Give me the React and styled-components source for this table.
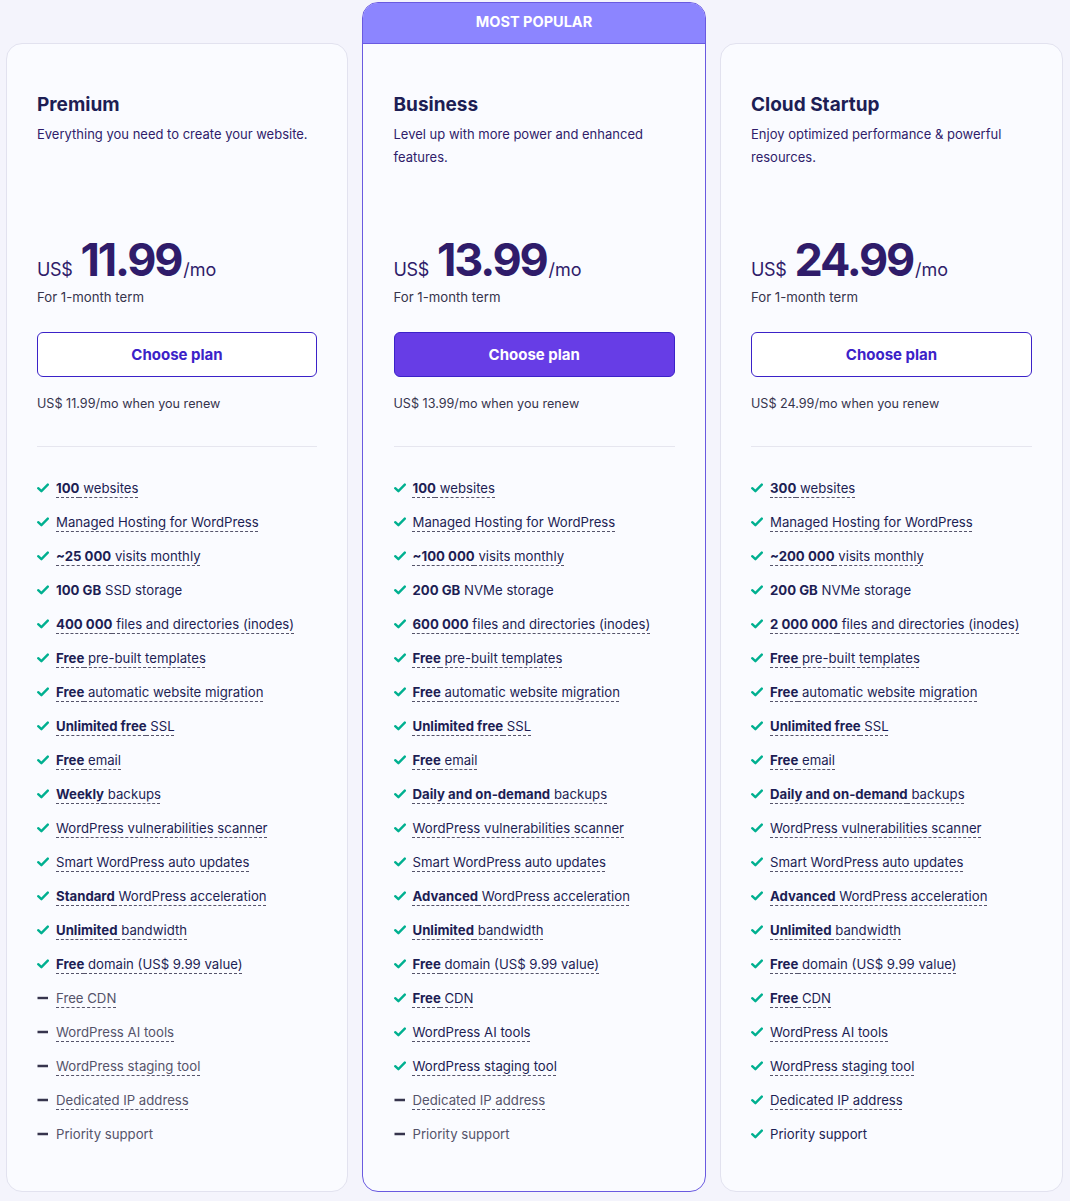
import React from 'react';
import styled, { createGlobalStyle } from 'styled-components';

const GlobalStyle = createGlobalStyle`
    html, body {
        margin: 0;
        padding: 0;
        background: #f4f4fc;
    }
    body {
        font-family: Inter, 'Noto Sans', sans-serif;
        color: #1d1e54;
    }
`;

const Page = styled.div`
    width: 1070px;
    height: 1201px;
    box-sizing: border-box;
    padding: 2px 7px 9px 6px;
    display: grid;
    grid-template-columns: 342px 344px 343px;
    column-gap: 14px;
`;

const Column = styled.div`
    display: flex;
    flex-direction: column;
    padding-top: ${props => (props.featured ? 0 : 41)}px;
`;

const Card = styled.div`
    flex: 1;
    display: flex;
    flex-direction: column;
    background: #fafbff;
    border: ${props => (props.featured ? '1.5px solid #6a5ae0' : '1px solid #e2e2ef')};
    border-radius: 16px;
    overflow: hidden;
`;

const Banner = styled.div`
    height: 41px;
    box-sizing: border-box;
    padding-bottom: 4px;
    background: #8c85ff;
    border-bottom: 1.5px solid #6a5ae0;
    color: #fff;
    font-weight: 700;
    font-size: 14.5px;
    display: flex;
    align-items: center;
    justify-content: center;
`;

const Body = styled.div`
    padding: 49px 30px 40px ${props => (props.featured ? 30.5 : 30)}px;
    display: flex;
    flex-direction: column;
`;

const Title = styled.h2`
    margin: 0;
    font-size: 19px;
    line-height: 24px;
    font-weight: 700;
    color: #1d1e54;
`;

const Description = styled.p`
    margin: 6px 0 0;
    font-size: 13px;
    line-height: 23px;
    min-height: 46px;
    color: #2f1c6a;
`;

const PriceRow = styled.div`
    margin-top: 68px;
    display: flex;
    align-items: baseline;
    color: #2f1c6a;
`;

const Currency = styled.span`
    font-size: 18px;
    letter-spacing: -0.3px;
    margin-right: 8px;
`;

const Amount = styled.span`
    font-size: 45px;
    line-height: 46px;
    font-weight: 700;
    letter-spacing: -2.2px;
`;

const Period = styled.span`
    font-size: 18px;
    margin-left: 2px;
`;

const Term = styled.div`
    margin-top: 4px;
    font-size: 13.2px;
    line-height: 20px;
    color: #36344d;
`;

const Button = styled.button`
    margin-top: 25px;
    height: 45px;
    width: 100%;
    border-radius: 6px;
    border: 1.5px solid #3b22c8;
    background: ${props => (props.primary ? '#673de6' : '#ffffff')};
    color: ${props => (props.primary ? '#ffffff' : '#3b22c8')};
    font-family: Inter, 'Noto Sans', sans-serif;
    font-size: 15px;
    font-weight: 700;
    cursor: pointer;
`;

const Renew = styled.div`
    margin-top: 17px;
    font-size: 12.6px;
    line-height: 20px;
    color: #36344d;
`;

const Divider = styled.hr`
    margin: 32px 0 0;
    border: none;
    border-top: 1.5px solid #e6e6ef;
`;

const Features = styled.ul`
    list-style: none;
    margin: 24px 0 0;
    padding: 0;
`;

const Feature = styled.li`
    height: 34px;
    display: flex;
    align-items: center;
    font-size: 13.2px;
    color: ${props => (props.off ? '#55536a' : '#1d1e54')};
`;

const IconBox = styled.span`
    width: 19px;
    flex-shrink: 0;
    display: flex;
    align-items: center;
`;

const Label = styled.span`
    text-decoration: ${props => (props.dashed ? 'underline dashed' : 'none')};
    text-decoration-color: #55536a;
    text-underline-offset: 4px;
    text-decoration-thickness: 1px;

    b {
        font-weight: 700;
        color: ${props => (props.off ? '#55536a' : '#1d1e54')};
    }
`;

const Check = () => (
    <svg width="12" height="10" viewBox="0 0 12 10">
        <path d="M1.2 5.2 L4.4 8.2 L10.8 1.6" fill="none" stroke="#00b090" strokeWidth="2.4" strokeLinecap="round" strokeLinejoin="round" />
    </svg>
);

const Dash = () => (
    <svg width="12" height="10" viewBox="0 0 12 10">
        <path d="M0.5 5 H11" stroke="#36344d" strokeWidth="2.4" />
    </svg>
);

// "**bold** rest" -> spans
const renderText = text =>
    text.split(/(\*\*[^*]+\*\*)/).filter(Boolean).map((part, i) =>
        part.startsWith('**') ? <b key={i}>{part.slice(2, -2)}</b> : <React.Fragment key={i}>{part}</React.Fragment>
    );

// [text, dashed, included]
const shared = (tier, off) => [
    ['**Free** pre-built templates', true, true],
    ['**Free** automatic website migration', true, true],
    ['**Unlimited free** SSL', true, true],
    ['**Free** email', true, true],
    [tier.backups, true, true],
    ['WordPress vulnerabilities scanner', true, true],
    ['Smart WordPress auto updates', true, true],
    [tier.accel, true, true],
    ['**Unlimited** bandwidth', true, true],
    ['**Free** domain (US$ 9.99 value)', true, true],
    [off.cdn ? 'Free CDN' : '**Free** CDN', true, !off.cdn],
    ['WordPress AI tools', true, !off.ai],
    ['WordPress staging tool', true, !off.staging],
    ['Dedicated IP address', true, !off.ip],
    ['Priority support', false, !off.support],
];

const plans = [
    {
        name: 'Premium',
        description: 'Everything you need to create your website.',
        price: '11.99',
        features: [
            ['**100** websites', true, true],
            ['Managed Hosting for WordPress', true, true],
            ['**~25 000** visits monthly', true, true],
            ['**100 GB** SSD storage', false, true],
            ['**400 000** files and directories (inodes)', true, true],
            ...shared(
                { backups: '**Weekly** backups', accel: '**Standard** WordPress acceleration' },
                { cdn: true, ai: true, staging: true, ip: true, support: true }
            ),
        ],
    },
    {
        name: 'Business',
        description: 'Level up with more power and enhanced features.',
        price: '13.99',
        featured: true,
        features: [
            ['**100** websites', true, true],
            ['Managed Hosting for WordPress', true, true],
            ['**~100 000** visits monthly', true, true],
            ['**200 GB** NVMe storage', false, true],
            ['**600 000** files and directories (inodes)', true, true],
            ...shared(
                { backups: '**Daily and on-demand** backups', accel: '**Advanced** WordPress acceleration' },
                { ip: true, support: true }
            ),
        ],
    },
    {
        name: 'Cloud Startup',
        description: 'Enjoy optimized performance & powerful resources.',
        price: '24.99',
        features: [
            ['**300** websites', true, true],
            ['Managed Hosting for WordPress', true, true],
            ['**~200 000** visits monthly', true, true],
            ['**200 GB** NVMe storage', false, true],
            ['**2 000 000** files and directories (inodes)', true, true],
            ...shared(
                { backups: '**Daily and on-demand** backups', accel: '**Advanced** WordPress acceleration' },
                {}
            ),
        ],
    },
];

const PlanCard = ({ plan }) => (
    <Column featured={plan.featured}>
        <Card featured={plan.featured}>
            {plan.featured && <Banner>MOST POPULAR</Banner>}
            <Body featured={plan.featured}>
                <Title>{plan.name}</Title>
                <Description>{plan.description}</Description>
                <PriceRow>
                    <Currency>US$</Currency>
                    <Amount>{plan.price}</Amount>
                    <Period>/mo</Period>
                </PriceRow>
                <Term>For 1-month term</Term>
                <Button primary={plan.featured}>Choose plan</Button>
                <Renew>US$ {plan.price}/mo when you renew</Renew>
                <Divider />
                <Features>
                    {plan.features.map(([text, dashed, included]) => (
                        <Feature key={text} off={!included}>
                            <IconBox>{included ? <Check /> : <Dash />}</IconBox>
                            <Label dashed={dashed} off={!included}>
                                {renderText(text)}
                            </Label>
                        </Feature>
                    ))}
                </Features>
            </Body>
        </Card>
    </Column>
);

const App = () => (
    <>
        <GlobalStyle />
        <Page>
            {plans.map(plan => (
                <PlanCard key={plan.name} plan={plan} />
            ))}
        </Page>
    </>
);

export default App;
